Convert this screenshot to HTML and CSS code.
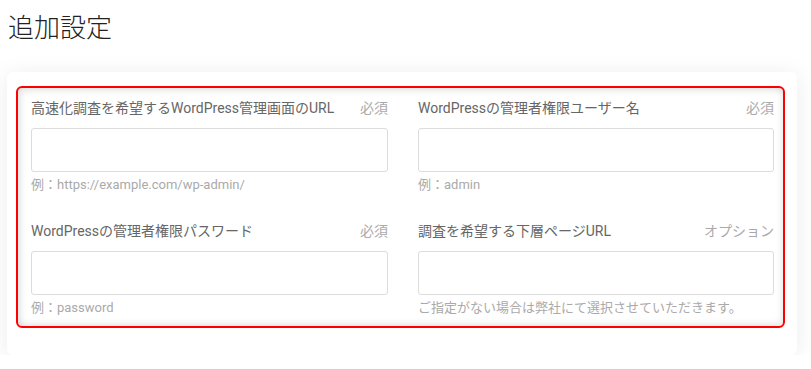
FILE: index.html
```html
<!DOCTYPE html>
<html lang="ja">
    <head>
        <meta charset="UTF-8">
        <title>追加設定</title>
        <link rel="stylesheet" href="styles.css">
    </head>
    <body>
        <h1 class="pageTitle">追加設定</h1>
        <section class="card">
            <div class="fieldBox">
                <div class="field">
                    <div class="fieldHead">
                        <label for="adminUrl">高速化調査を希望するWordPress管理画面のURL</label>
                        <span class="tag">必須</span>
                    </div>
                    <input id="adminUrl" type="text">
                    <p class="hint">例：https://example.com/wp-admin/</p>
                </div>
                <div class="field">
                    <div class="fieldHead">
                        <label for="adminUser">WordPressの管理者権限ユーザー名</label>
                        <span class="tag">必須</span>
                    </div>
                    <input id="adminUser" type="text">
                    <p class="hint">例：admin</p>
                </div>
                <div class="field">
                    <div class="fieldHead">
                        <label for="adminPass">WordPressの管理者権限パスワード</label>
                        <span class="tag">必須</span>
                    </div>
                    <input id="adminPass" type="text">
                    <p class="hint">例：password</p>
                </div>
                <div class="field">
                    <div class="fieldHead">
                        <label for="subPage">調査を希望する下層ページURL</label>
                        <span class="tag">オプション</span>
                    </div>
                    <input id="subPage" type="text">
                    <p class="hint">ご指定がない場合は弊社にて選択させていただきます。</p>
                </div>
            </div>
        </section>
    </body>
</html>
```

FILE: styles.css
```css
:root {
    --page-background-color: #fff;
    --label-color: #666;
    --muted-color: #aaa;
    --input-border-color: #dcdcdc;
    --highlight-color: #f00;
}

body {
    margin: 0;
    background-color: var(--page-background-color);
    font-family: Roboto, "Noto Sans CJK JP", sans-serif;
}

.pageTitle {
    margin: 0;
    padding: 12px 8px 0;
    height: 60px;
    box-sizing: border-box;
    font-size: 26px;
    font-weight: 300;
    line-height: 32px;
    color: #222;
}

.card {
    margin: 12px 14px 0 7px;
    padding: 14px 12px 27px 9px;
    width: 790px;
    box-sizing: border-box;
    background-color: #fff;
    border-radius: 6px;
    box-shadow: 0 2px 22px rgba(0, 0, 0, 0.08);
}

.fieldBox {
    display: grid;
    grid-template-columns: 357px 356px;
    column-gap: 30px;
    row-gap: 27px;
    padding: 10px 9px 9px 13px;
    border: 2px solid var(--highlight-color);
    border-radius: 6px;
    box-shadow: inset 3px 3px 6px rgba(0, 0, 0, 0.1), inset -2px -3px 6px rgba(0, 0, 0, 0.08);
}

.fieldHead {
    display: flex;
    justify-content: space-between;
    font-size: 14px;
    line-height: 20px;
    margin-bottom: 10px;
}

.fieldHead label {
    color: var(--label-color);
}

.tag {
    color: var(--muted-color);
}

.field input {
    display: block;
    width: 100%;
    height: 44px;
    box-sizing: border-box;
    margin: 0;
    border: 1px solid var(--input-border-color);
    border-radius: 3px;
    background-color: #fff;
}

.hint {
    margin: 4px 0 0;
    font-size: 13px;
    line-height: 18px;
    color: var(--muted-color);
}
```
